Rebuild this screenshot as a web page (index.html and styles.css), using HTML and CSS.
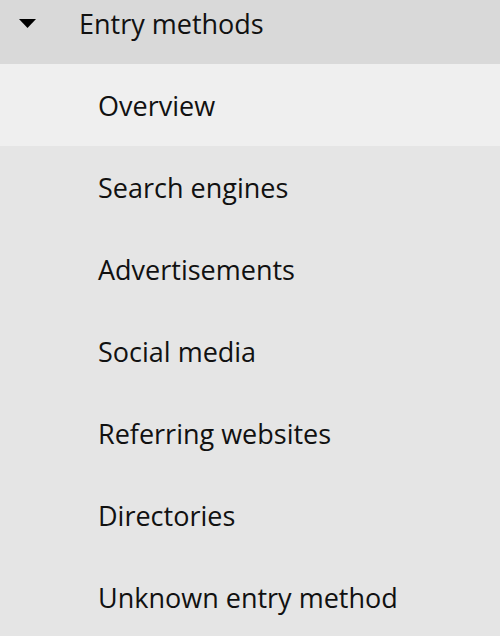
FILE: index.html
```html
<!DOCTYPE html>
<html>
<head>
<meta charset="utf-8">
<link rel="stylesheet" href="styles.css">
</head>
<body>
<nav class="menu">
  <div class="group">
    <svg class="caret" width="17" height="9" viewBox="0 0 17 9"><path d="M0 0H17L8.5 9Z" fill="#000"/></svg>
    <span class="group-label">Entry methods</span>
  </div>
  <div class="item active">Overview</div>
  <div class="item">Search engines</div>
  <div class="item">Advertisements</div>
  <div class="item">Social media</div>
  <div class="item">Referring websites</div>
  <div class="item">Directories</div>
  <div class="item">Unknown entry method</div>
</nav>
</body>
</html>
```
FILE: styles.css
```css
html, body {
  margin: 0;
  padding: 0;
  background: #e5e5e5;
}
body {
  width: 500px;
  height: 636px;
  overflow: hidden;
  font-family: "Open Sans", Lato, sans-serif;
  font-variant-ligatures: none;
  color: #111;
}
.menu {
  display: flex;
  flex-direction: column;
  margin-top: -18px;
}
.group {
  height: 82px;
  background: #d9d9d9;
  display: flex;
  align-items: center;
  font-size: 27px;
}
.caret {
  margin-left: 19px;
  margin-right: 43px;
  flex: none;
}
.item {
  height: 82px;
  display: flex;
  align-items: center;
  padding-left: 98px;
  font-size: 27px;
  background: #e5e5e5;
}
.item.active {
  background: #efefef;
}
```
